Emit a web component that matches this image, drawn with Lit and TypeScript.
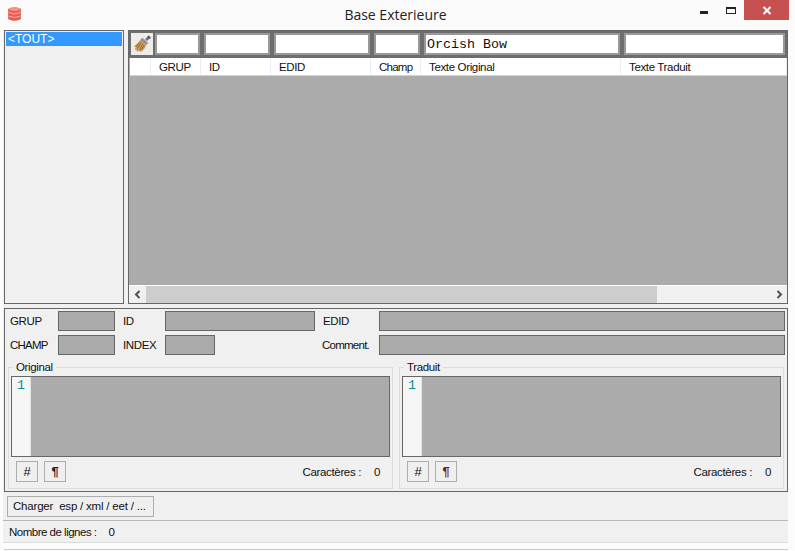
import { LitElement, html, css, svg } from "lit";
import { customElement } from "lit/decorators.js";

const dbIcon = svg`<svg class="db" width="13" height="16" viewBox="0 0 13 16">
  <path d="M0.5 3 Q6.5 0 12.5 3 V13 Q6.5 16 0.5 13Z" fill="#ea5f50" stroke="#d24c40" stroke-width=".6"/>
  <ellipse cx="6.5" cy="3" rx="5.6" ry="1.9" fill="#f79385"/>
  <path d="M.7 6.6 Q6.5 9.2 12.3 6.6M.7 10.2 Q6.5 12.8 12.3 10.2" fill="none" stroke="#f9ada2" stroke-width="1"/>
</svg>`;

const broom = svg`<svg width="20" height="20" viewBox="0 0 20 20">
  <path d="M13 5 L16.2 2 L18.4 4 L15 7Z" fill="#77716a"/>
  <path d="M16 2 L18.4 4.2" stroke="#4c4a48" stroke-width="1.6"/>
  <path d="M10.4 3.8 L16.2 9 L14 11.2 L8.4 5.8Z" fill="#8f929a"/>
  <path d="M8.4 5.6 L14.2 11 Q13 15.5 8.4 18 L7 16.6 L6 17.8 L2.6 15 L3.8 13.6 L2 12.2 Q6 10 8.4 5.6Z" fill="#cb9c5c"/>
  <path d="M9 8 L5.6 14.5M11 9.6 L7.6 16.2M11.8 11.5 L9.6 15.6M7.2 9 L4 13" stroke="#8f6733" stroke-width=".9"/>
</svg>`;

const leftArrow = svg`<svg width="8" height="9" viewBox="0 0 8 9"><path d="M5.5 1 L2 4.5 L5.5 8" fill="none" stroke="#505050" stroke-width="2"/></svg>`;
const rightArrow = svg`<svg width="8" height="9" viewBox="0 0 8 9"><path d="M2.5 1 L6 4.5 L2.5 8" fill="none" stroke="#505050" stroke-width="2"/></svg>`;

@customElement("app-root")
export class AppRoot extends LitElement {
  static styles = css`
    :host {
      display: block;
      width: 795px;
      height: 551px;
      background: #fcfcfc;
      font-family: "Liberation Sans", Arial, sans-serif;
      font-size: 11.5px;
      letter-spacing: -0.35px;
      color: #111;
      overflow: hidden;
    }
    .titlebar {
      height: 30px;
      display: grid;
      grid-template-columns: 1fr auto 1fr;
      align-items: start;
      background: #fbfbfb;
    }
    .title-left { padding: 6px 0 0 8px; height: 24px; }
    .db { display: block; }
    .title {
      font-family: "Open Sans", sans-serif;
      font-size: 14px;
      letter-spacing: 0;
      line-height: 30px;
      color: #222;
      transform: translateX(-2px);
    }
    .win-btns { display: flex; justify-content: flex-end; padding-right: 6px; align-items: flex-start; }
    .min { width: 26px; height: 20px; display: flex; justify-content: center; align-items: flex-start; }
    .min i { display: block; width: 8px; height: 3px; background: #222; margin: 11px 2px 0 0; }
    .max { width: 26px; height: 20px; display: flex; justify-content: center; }
    .max i { display: block; width: 8px; height: 4px; border: 1px solid #222; border-top-width: 2px; margin-top: 7px; box-sizing: content-box; }
    .close { width: 45px; height: 20px; background: #c75050; display: flex; justify-content: center; align-items: center; margin-left: 0; }
    .frame {
      width: 785px;
      margin-left: 3px;
      background: #f0f0f0;
      padding-left: 1px;
      box-sizing: border-box;
      height: 513px;
    }
    .top { display: flex; gap: 4px; height: 274px; }
    .list {
      width: 120px;
      box-sizing: border-box;
      border: 1px solid #666;
      padding: 1px;
      flex: none;
    }
    .sel {
      background: #3399ff;
      color: #fff;
      height: 14px;
      line-height: 14px;
      padding-left: 2px;
      font-size: 12px;
      letter-spacing: 0;
    }
    .grid {
      width: 660px;
      flex: none;
      box-sizing: border-box;
      border: 1px solid #666;
      display: flex;
      flex-direction: column;
      background: #ababab;
    }
    .filter {
      height: 27px;
      box-sizing: border-box;
      background: #6d6d6d;
      padding: 2px 2px 3px 2px;
      display: flex;
      gap: 4px;
    }
    .broom {
      width: 22px;
      height: 22px;
      background: #ececec;
      margin-right: -2px;
      display: flex;
      align-items: center;
      justify-content: center;
    }
    .fi {
      box-sizing: border-box;
      height: 22px;
      background: #fff;
      border: 2px solid #999;
      font-family: "Liberation Mono", monospace;
      font-size: 13.33px;
      letter-spacing: 0;
      line-height: 20px;
      padding-left: 1px;
      color: #111;
    }
    .head {
      height: 17px;
      margin-left: 1px;
      background: #fff;
      display: flex;
      border-bottom: 1px solid #cdd5dd;
      box-sizing: content-box;
      line-height: 18px;
    }
    .hc {
      box-sizing: border-box;
      border-right: 1px solid #e6eff7;
      padding-left: 8px;
      flex: none;
      color: #111;
    }
    .canvas { flex: 1; }
    .scroll {
      height: 17px;
      border-top: 1px solid #fff;
      background: #f0f0f0;
      display: flex;
      align-items: stretch;
      box-sizing: content-box;
    }
    .arrow { width: 17px; flex: none; display: flex; align-items: center; justify-content: center; }
    .track { flex: 1; display: flex; }
    .thumb { width: 511px; background: #cdcdcd; }

    .detail {
      margin-top: 4px;
      height: 184px;
      width: 784px;
      box-sizing: border-box;
      border: 1px solid #666;
      padding: 2px 2px 2px 3px;
    }
    .fields {
      display: grid;
      grid-template-columns: 48px 57px 8px 42px 150px 8px 56px 406px;
      grid-auto-rows: 20px;
      row-gap: 4px;
      padding-left: 2px;
      align-items: center;
      line-height: 20px;
    }
    .fb {
      height: 20px;
      box-sizing: border-box;
      background: #ababab;
      border: 1px solid #666;
    }
    .narrow { width: 50px; }
    .sp { width: 8px; }
    .tight { letter-spacing: -0.75px; }
    .nudge { margin-left: -1px; }
    .groups { display: flex; gap: 6px; margin-top: 12px; }
    .group {
      position: relative;
      width: 385px;
      height: 122px;
      box-sizing: border-box;
      border: 1px solid #dcdcdc;
      padding: 8px 2px 0 2px;
    }
    .legend {
      position: absolute;
      left: 4px;
      top: -7px;
      background: #f0f0f0;
      padding: 0 3px;
      line-height: 13px;
    }
    .editor {
      width: 379px;
      height: 81px;
      box-sizing: border-box;
      border: 1px solid #666;
      background: #ababab;
      display: flex;
    }
    .margin {
      width: 19px;
      background: #f5f5f5;
      border-right: 1px solid #e4e4e4;
      font-family: "Liberation Mono", monospace;
      font-size: 13.33px;
      letter-spacing: 0;
      line-height: 15px;
      padding: 1px 0 0 5px;
      box-sizing: border-box;
      color: #0a8f96;
    }
    .tools {
      display: flex;
      align-items: flex-start;
      gap: 6px;
      margin-top: 4px;
      padding-left: 5px;
    }
    .tb {
      width: 22px;
      height: 21px;
      box-sizing: border-box;
      border: 1px solid #adadad;
      background: #efefef;
      display: flex;
      align-items: center;
      justify-content: center;
      font-size: 13px;
      letter-spacing: 0;
      font-family: "Liberation Sans", sans-serif;
    }
    .tb.on { color: #7a2400; font-weight: bold; }
    .tb.para { font-weight: bold; color: #223; }
    .count { margin-left: auto; display: flex; line-height: 22px; padding-right: 10px; }
    .count b { font-weight: normal; width: 14px; margin-left: 5px; text-align: right; }
    .charger {
      height: 29px;
      box-sizing: border-box;
      border-bottom: 1px solid #b8b8b8;
      padding: 4px 0 0 3px;
      margin-left: -1px;
      width: 785px;
    }
    .charger div {
      margin-left: 1px;
      width: 147px;
      height: 21px;
      box-sizing: border-box;
      border: 1px solid #adadad;
      background: #efefef;
      line-height: 19px;
      padding-left: 5px;
      letter-spacing: -0.2px;
      white-space: pre;
    }
    .status {
      height: 22px;
      box-sizing: border-box;
      margin-left: -1px;
      width: 785px;
      border-bottom: 1px solid #dcdcdc;
      line-height: 23px;
      padding-left: 6px;
      letter-spacing: -0.5px;
      display: flex;
    }
    .status b { font-weight: normal; margin-left: 12px; }
    .bottomline { height: 1px; background: #c8c8c8; margin-top: 6px; }
  `;

  render() {
    const cols: [string, number, string][] = [
      ["", 21, ""], ["GRUP", 50, ""], ["ID", 70, ""], ["EDID", 100, ""], ["Champ", 50, "tight"], ["Texte Original", 200, ""], ["Texte Traduit", 166, ""],
    ];
    const filters: [string, number][] = [["", 45], ["", 66], ["", 96], ["", 46], ["Orcish Bow", 196], ["", 161]];
    return html`
      <div class="titlebar">
        <div class="title-left">${dbIcon}</div>
        <div class="title">Base Exterieure</div>
        <div class="win-btns">
          <div class="min"><i></i></div>
          <div class="max"><i></i></div>
          <div class="close">
            <svg width="10" height="9" viewBox="0 0 10 9"><path d="M1.5 1 L8.5 8 M8.5 1 L1.5 8" stroke="#fff" stroke-width="2"/></svg>
          </div>
        </div>
      </div>
      <div class="frame">
        <div class="top">
          <div class="list"><div class="sel">&lt;TOUT&gt;</div></div>
          <div class="grid">
            <div class="filter">
              <div class="broom">${broom}</div>
              ${filters.map(([t, w]) => html`<div class="fi" style="width:${w}px">${t}</div>`)}
            </div>
            <div class="head">
              ${cols.map(([t, w, c]) => html`<div class="hc ${c}" style="width:${w}px">${t}</div>`)}
            </div>
            <div class="canvas"></div>
            <div class="scroll">
              <div class="arrow">${leftArrow}</div>
              <div class="track"><div class="thumb"></div></div>
              <div class="arrow">${rightArrow}</div>
            </div>
          </div>
        </div>
        <div class="detail">
          <div class="fields">
            <span>GRUP</span><div class="fb"></div><i class="sp"></i><span>ID</span><div class="fb"></div><i class="sp"></i><span>EDID</span><div class="fb"></div>
            <span class="tight">CHAMP</span><div class="fb"></div><i class="sp"></i><span>INDEX</span><div class="fb narrow"></div><i class="sp"></i><span class="tight nudge">Comment.</span><div class="fb"></div>
          </div>
          <div class="groups">
            ${[["Original", false], ["Traduit", true]].map(([name, on]) => html`
              <div class="group">
                <div class="legend">${name}</div>
                <div class="editor"><div class="margin">1</div></div>
                <div class="tools">
                  <div class="tb">#</div>
                  <div class="tb ${on ? "on" : "para"}">¶</div>
                  <div class="count"><span>Caractères :</span><b>0</b></div>
                </div>
              </div>`)}
          </div>
        </div>
        <div class="charger"><div>Charger  esp / xml / eet / ...</div></div>
        <div class="status"><span>Nombre de lignes :</span><b>0</b></div>
        <div class="bottomline"></div>
      </div>
    `;
  }
}
